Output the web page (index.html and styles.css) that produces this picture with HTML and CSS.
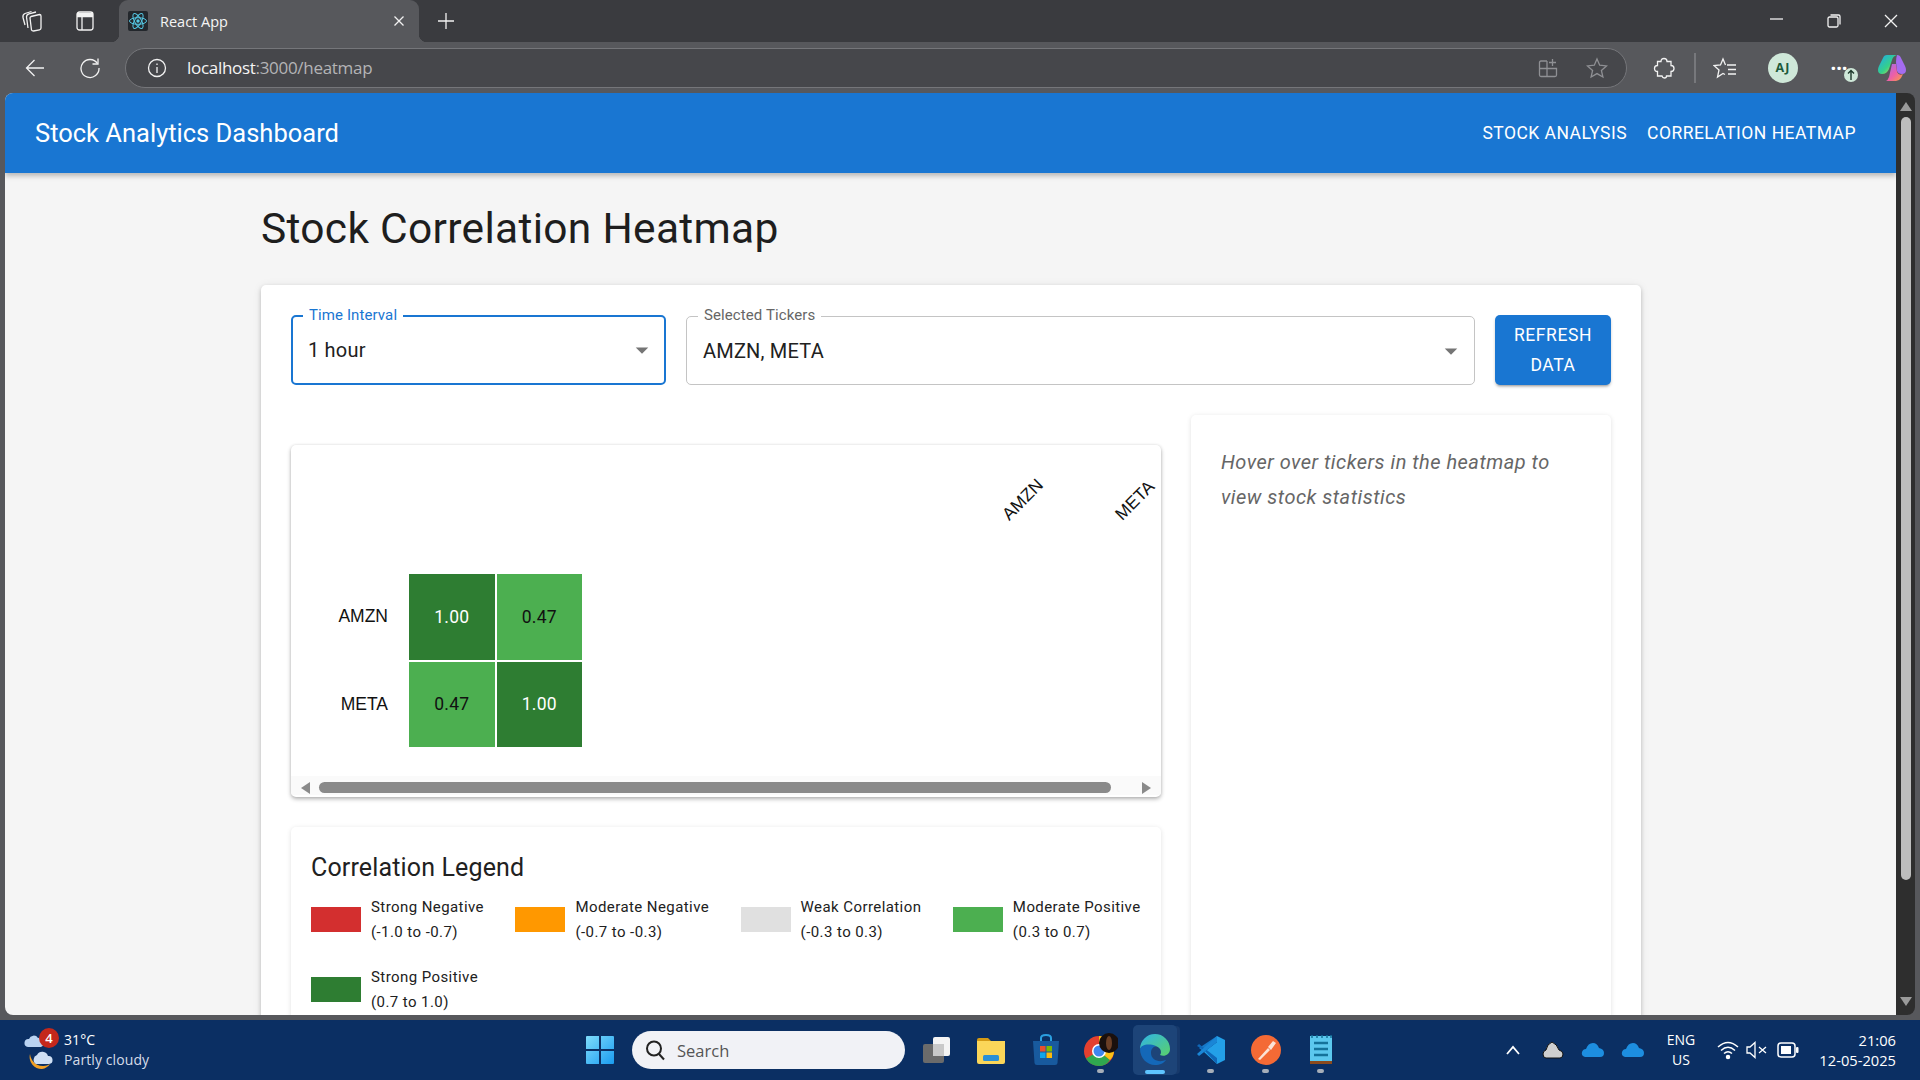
FILE: index.html
```html
<!DOCTYPE html>
<html>
  <head>
    <meta charset="utf-8" />
    <title>React App</title>
    <link rel="stylesheet" href="styles.css">
  </head>
  <body>
    <div class="tabstrip">
      <span class="slot strip-first">
        <svg width="24" height="24" viewBox="0 0 24 24" class="line"><path d="M11 7.500 19.500 5.500Q21 5.500 21 7V19Q21 20.500 19.500 20.800L13.500 22Q12 22 11.500 21L10 9Q10 8 11 7.500Z"/><path d="M8 19 6.500 8Q6.500 5.500 9 4.800L16 3"/><path d="M5 16 3 8.500Q2.500 5.500 5 4.500L11.500 2.500"/></svg>
      </span>
      <span class="slot strip-second">
        <svg width="20" height="22" viewBox="0 0 20 22" class="line"><rect x="2" y="2" width="16" height="18" rx="2.500"/><path d="M2 5H18" stroke-width="4.500"/><path d="M7 7V20"/></svg>
      </span>
      <div class="tab">
        <svg class="favicon" width="20" height="20" viewBox="0 0 20 20"><rect width="20" height="20" rx="2" fill="#23272c"/><g fill="none" stroke="#55c8e4" stroke-width="1"><ellipse cx="10" cy="10" rx="8.500" ry="3.300"/><ellipse cx="10" cy="10" rx="8.500" ry="3.300" transform="rotate(60 10 10)"/><ellipse cx="10" cy="10" rx="8.500" ry="3.300" transform="rotate(120 10 10)"/></g><circle cx="10" cy="10" r="1.700" fill="#55c8e4"/></svg>
        <span class="tab-title">React App</span>
        <svg class="tab-close line" width="12" height="12" viewBox="0 0 12 12"><path d="M1.500 1.500 10.500 10.500M10.500 1.500 1.500 10.500"/></svg>
      </div>
      <span class="slot strip-plus">
        <svg width="20" height="20" viewBox="0 0 20 20" class="line"><path d="M10 2V18M2 10H18"/></svg>
      </span>
      <div class="window-controls">
        <span class="slot"><svg width="14" height="14" viewBox="0 0 14 14" class="line"><path d="M1 5H14"/></svg></span>
        <span class="slot"><svg width="14" height="14" viewBox="0 0 14 14" class="line"><rect x="1" y="3" width="10" height="10" rx="1.500"/><path d="M3.500 1H11.500Q13 1 13 2.500V10.500"/></svg></span>
        <span class="slot"><svg width="14" height="14" viewBox="0 0 14 14" class="line"><path d="M1 1 13 13M13 1 1 13"/></svg></span>
      </div>
    </div>

    <div class="toolbar">
      <span class="slot tool"><svg width="22" height="22" viewBox="0 0 22 22" class="line"><path d="M20 11H2.500M10.500 3 2.500 11l8 8"/></svg></span>
      <span class="slot tool"><svg width="22" height="22" viewBox="0 0 22 22" class="line"><path d="M18.500 6.500A9 9 0 1 0 20 11"/><path d="M19 1.500V7H13.500"/></svg></span>
      <div class="address">
        <svg class="info line" width="20" height="20" viewBox="0 0 20 20"><circle cx="10" cy="10" r="8.500"/><path d="M10 9V15M10 5.500V7"/></svg>
        <span class="url">localhost<span class="url-dim">:3000/heatmap</span></span>
        <svg class="addr-apps dim-line" width="20" height="20" viewBox="0 0 20 20"><path d="M9 3H3Q1.500 3 1.500 4.500V17Q1.500 18.500 3 18.500H17Q18.500 18.500 18.500 17V10.500H1.500M9 3V18.500"/><path d="M14.500 1V8M11 4.500H18"/></svg>
        <svg class="addr-star dim-line" width="22" height="22" viewBox="0 0 22 22"><path d="M11 2 13.700 8.200 20.500 8.900 15.400 13.400 16.900 20 11 16.600 5.100 20 6.600 13.400 1.500 8.900 8.300 8.200Z"/></svg>
      </div>
      <span class="slot tool-ext"><svg width="22" height="22" viewBox="0 0 22 22" class="line"><path d="M8 4.500Q8 1.500 11 1.500T14 4.500H18V8.500Q21 8.500 21 11.500T18 14.500V19H13.500Q13.500 21 11.500 21T9 19H4.500V14.500Q1.500 14.500 1.500 11.500T4.500 8.500V4.500Z"/></svg></span>
      <span class="tool-sep"></span>
      <span class="slot tool-fav"><svg width="24" height="22" viewBox="0 0 24 22" class="line"><path d="M12.500 8 10 2 7.500 8 1 8.500 6 13 4.500 20 10 16.500 12 17.500"/><path d="M14 8H23M15 12.500H23M15 17H23"/></svg></span>
      <span class="slot tool-avatar"><span class="avatar">AJ</span></span>
      <span class="slot tool-more">
        <span class="more-dots">···</span>
        <span class="more-badge"><svg width="10" height="12" viewBox="0 0 10 12" fill="none" stroke="#1d3a2c" stroke-width="1.400"><path d="M5 11V2M2 4.500 5 1.500 8 4.500"/></svg></span>
      </span>
      <span class="slot tool-copilot">
        <svg width="30" height="28" viewBox="0 0 30 28">
          <defs>
            <linearGradient id="copA" x1="0" y1="0" x2="1" y2="1"><stop offset="0" stop-color="#1fa8ef"/><stop offset="0.55" stop-color="#35d08a"/><stop offset="1" stop-color="#f3dc3a"/></linearGradient>
            <linearGradient id="copB" x1="0" y1="0" x2="1" y2="1"><stop offset="0" stop-color="#9a6cf2"/><stop offset="0.55" stop-color="#ee5fa6"/><stop offset="1" stop-color="#f9a03b"/></linearGradient>
          </defs>
          <path d="M10 1H20Q16 2 15 6L12 15Q10 20 5 20 1 20 1 16 1 14 2 12L6 4Q7 1 10 1Z" fill="url(#copA)"/>
          <path d="M20 1Q23 1 24 4L28 12Q29 14 29 16 29 20 25 20 21 20 20 17L19 8Q19 4 20 1Z" fill="#a46cf0"/>
          <path d="M15 10 19 10 20 18Q22 22 26 20L24 24Q22 27 19 27H9Q11 26 12 23Z" fill="url(#copB)"/>
        </svg>
      </span>
    </div>

    <div class="viewport">
      <div class="page">
        <header class="appbar">
          <div class="brand">Stock Analytics Dashboard</div>
          <nav class="appnav">
            <a>Stock Analysis</a>
            <a>Correlation Heatmap</a>
          </nav>
        </header>

        <main class="content">
          <h1>Stock Correlation Heatmap</h1>
          <section class="paper">
            <div class="controls">
              <div class="field field-focus field-interval">
                <label>Time Interval</label>
                <span>1 hour</span>
                <svg width="30" height="30" viewBox="0 0 24 24"><path d="M7 10l5 5 5-5z" fill="#757575"/></svg>
              </div>
              <div class="field field-tickers">
                <label>Selected Tickers</label>
                <span>AMZN, META</span>
                <svg width="30" height="30" viewBox="0 0 24 24"><path d="M7 10l5 5 5-5z" fill="#757575"/></svg>
              </div>
              <button class="refresh">Refresh Data</button>
            </div>

            <div class="columns">
              <div class="left-col">
                <div class="card heat-card">
                  <div class="heat-head">
                    <span>AMZN</span>
                    <span>META</span>
                  </div>
                  <div class="heat-row">
                    <span class="heat-label">AMZN</span>
                    <span class="cell strong">1.00</span>
                    <span class="cell moderate">0.47</span>
                  </div>
                  <div class="heat-row">
                    <span class="heat-label">META</span>
                    <span class="cell moderate">0.47</span>
                    <span class="cell strong">1.00</span>
                  </div>
                  <div class="hscroll">
                    <i class="arrow-left"></i>
                    <b></b>
                    <i class="arrow-right"></i>
                  </div>
                </div>

                <div class="card legend">
                  <h2>Correlation Legend</h2>
                  <div class="legend-items">
                    <div class="legend-item"><i class="swatch c-red"></i><p>Strong Negative<br>(-1.0 to -0.7)</p></div>
                    <div class="legend-item"><i class="swatch c-orange"></i><p>Moderate Negative<br>(-0.7 to -0.3)</p></div>
                    <div class="legend-item"><i class="swatch c-grey"></i><p>Weak Correlation<br>(-0.3 to 0.3)</p></div>
                    <div class="legend-item"><i class="swatch c-green"></i><p>Moderate Positive<br>(0.3 to 0.7)</p></div>
                    <div class="legend-item"><i class="swatch c-dark"></i><p>Strong Positive<br>(0.7 to 1.0)</p></div>
                  </div>
                </div>
              </div>

              <aside class="card stats">
                <p>Hover over tickers in the heatmap to view stock statistics</p>
              </aside>
            </div>
          </section>
        </main>
      </div>
      <div class="vscroll">
        <i class="arrow-up"></i>
        <b></b>
        <i class="arrow-down"></i>
      </div>
    </div>

    <footer class="taskbar">
      <div class="weather">
        <svg class="weather-icon" width="34" height="44" viewBox="0 0 34 44">
          <path d="M4 19a4 4 0 0 1 1-8 5 5 0 0 1 9-1 4 4 0 0 1 3 9z" fill="#b9d3f2"/>
          <path d="M6 26a12 12 0 0 0 12 15 12 12 0 0 0 8-5A13 13 0 0 1 6 26z" fill="#f2a024"/>
          <path d="M12 36a5 5 0 0 1 1-9 6 6 0 0 1 11 1 4 4 0 0 1 1 8z" fill="#cfe0f5"/>
        </svg>
        <span class="weather-badge">4</span>
        <div class="weather-text">
          <span>31°C</span>
          <span>Partly cloudy</span>
        </div>
      </div>

      <span class="app start">
        <svg width="30" height="30" viewBox="0 0 30 30"><defs><linearGradient id="win" x1="0" y1="0" x2="1" y2="1"><stop offset="0" stop-color="#7fdcfb"/><stop offset="1" stop-color="#1a9cf0"/></linearGradient></defs><path d="M1 2Q1 1 2 1H14V14H1ZM16 1H28Q29 1 29 2V14H16ZM1 16H14V29H2Q1 29 1 28ZM16 16H29V28Q29 29 28 29H16Z" fill="url(#win)"/></svg>
      </span>
      <div class="search">
        <svg width="22" height="22" viewBox="0 0 22 22" fill="none" stroke="#222" stroke-width="2"><circle cx="10" cy="9.500" r="7"/><path d="M15 15 20 20.500"/></svg>
        <span>Search</span>
      </div>

      <span class="app">
        <svg width="32" height="32" viewBox="0 0 32 32"><rect x="13" y="3" width="17" height="19" rx="2" fill="#f4f4f4"/><rect x="3" y="10" width="21" height="19" rx="2" fill="#6b6b6b"/><rect x="13" y="10" width="11" height="12" fill="#c9c9c9"/></svg>
      </span>
      <span class="app">
        <svg width="32" height="30" viewBox="0 0 32 30"><path d="M2 5Q2 3 4 3H13L16 6H2Z" fill="#d49a14"/><path d="M2 6H30V27Q30 29 28 29H4Q2 29 2 27Z" fill="#fbd659"/><rect x="8" y="20" width="16" height="6" rx="1.500" fill="#2a8fd6"/></svg>
      </span>
      <span class="app">
        <svg width="30" height="32" viewBox="0 0 30 32"><path d="M10 8V4Q10 1 15 1T20 4V8" fill="none" stroke="#2b9fe0" stroke-width="2"/><path d="M2 7H28L26.500 29Q26.400 31 24 31H6Q3.600 31 3.500 29Z" fill="#185a9e"/><rect x="9" y="12" width="5.500" height="5.500" fill="#e8502f"/><rect x="15.500" y="12" width="5.500" height="5.500" fill="#7fb900"/><rect x="9" y="18.500" width="5.500" height="5.500" fill="#11a5ea"/><rect x="15.500" y="18.500" width="5.500" height="5.500" fill="#fcb90c"/></svg>
      </span>
      <span class="app running">
        <svg width="34" height="34" viewBox="0 0 34 34"><circle cx="15" cy="18" r="15" fill="#e4402f"/><path d="M15 18 2 25.500A15 15 0 0 0 15 33Q22 33 26 27Z" fill="#2fa84f"/><path d="M15 3A15 15 0 0 1 30 18Q30 23 26 27L15 18Z" fill="#fbc116"/><circle cx="15" cy="18" r="7" fill="#fff"/><circle cx="15" cy="18" r="5.500" fill="#3f86ef"/><circle cx="25" cy="10" r="10" fill="#1a100d"/><ellipse cx="25" cy="10" rx="3" ry="7" fill="#6b3f26"/></svg>
      </span>
      <span class="app edge-active">
        <svg width="32" height="32" viewBox="0 0 32 32"><defs><linearGradient id="edgeA" x1="0" y1="0" x2="1" y2="1"><stop offset="0" stop-color="#2fb4e8"/><stop offset="1" stop-color="#5ad06a"/></linearGradient></defs><path d="M1 15A15 15 0 0 1 31 15C31 21 25 23 21 21 24 17 20 11 14 12 7 12 2 13 1 15Z" fill="url(#edgeA)"/><path d="M1 15C1 24 8 31 16 31 21 31 25 29 27 26 20 29 12 26 12 19 12 15 14 13 17 12 9 9 2 11 1 15Z" fill="#1468b8"/></svg>
      </span>
      <span class="app running">
        <svg width="30" height="30" viewBox="0 0 30 30"><path d="M21 1 29 5V25L21 29 8 17 21 7Z" fill="#23a0e8"/><path d="M21 1V7L8 17 3 13Z" fill="#1678c8"/><path d="M8 15 21 29V23L3 9 1 11Z" fill="#0f67b8"/><path d="M1 19 3 21 21 7V1Z" fill="#1a86d6"/></svg>
      </span>
      <span class="app running">
        <svg width="30" height="30" viewBox="0 0 30 30"><circle cx="15" cy="15" r="15" fill="#f46a35"/><path d="M7 24 17 13 19 15 9 25Z M17 12 22 6 25 8 20 15Z" fill="#fbe3d6"/></svg>
      </span>
      <span class="app running">
        <svg width="24" height="32" viewBox="0 0 24 32"><rect x="1" y="2" width="22" height="26" fill="#5cc8ee"/><rect x="1" y="27" width="22" height="3" fill="#8a4a1d"/><path d="M5 9H19M5 15H19M5 21H19" stroke="#14729a" stroke-width="2.400"/><path d="M3 1V4M8 1V4M13 1V4M18 1V4M22 1V4" stroke="#14729a" stroke-width="1.500"/></svg>
      </span>

      <div class="tray">
        <span class="tray-slot"><svg width="16" height="10" viewBox="0 0 16 10" fill="none" stroke="#fff" stroke-width="1.800"><path d="M2 9 8 2l6 7"/></svg></span>
        <span class="tray-slot"><svg width="22" height="22" viewBox="0 0 22 22"><path d="M4 19Q1 19 1 15 1 12 4 11 5 5 10 3 15 5 17 11 21 12 21 15 21 19 18 19Z" fill="#cfcfcf" stroke="#111" stroke-width="1"/></svg></span>
        <span class="tray-slot"><svg width="24" height="18" viewBox="0 0 24 18"><path d="M4 16Q0 15 1 11 2 8 5 8 7 2 12 2 16 2 18 7 23 8 23 12 23 16 19 16Z" fill="#1d8ee0"/></svg></span>
        <span class="tray-slot"><svg width="24" height="18" viewBox="0 0 24 18"><path d="M4 16Q0 15 1 11 2 8 5 8 7 2 12 2 16 2 18 7 23 8 23 12 23 16 19 16Z" fill="#1d8ee0"/></svg></span>
        <div class="lang"><span>ENG</span><span>US</span></div>
        <span class="tray-wifi"><svg width="22" height="20" viewBox="0 0 22 20" fill="none" stroke="#fff" stroke-width="1.500"><path d="M1 7Q11 -2 21 7M4 10.500Q11 4 18 10.500M7 13.500Q11 10 15 13.500"/><circle cx="11" cy="17" r="1.500" fill="#fff"/></svg></span>
        <span class="tray-vol"><svg width="22" height="20" viewBox="0 0 22 20" fill="none" stroke="#fff" stroke-width="1.300"><path d="M1 7V13H4L9 17.500V2.500L4 7Z"/><path d="M13 7 20 13M20 7 13 13"/></svg></span>
        <span class="tray-batt"><svg width="22" height="16" viewBox="0 0 22 16"><rect x="1" y="1" width="17" height="14" rx="3" fill="none" stroke="#fff" stroke-width="1.500"/><rect x="4" y="4" width="10" height="8" fill="#fff"/><rect x="19" y="5" width="2.500" height="6" rx="1" fill="#fff"/></svg></span>
        <div class="clock"><span>21:06</span><span>12-05-2025</span></div>
      </div>
    </footer>
  </body>
</html>
```

FILE: styles.css
```css
html, body {
  margin: 0;
  height: 1080px;
  overflow: hidden;
  background: #57585c;
  font-family: "Open Sans", sans-serif;
}

svg { display: block; flex: none; }

.line {
  fill: none;
  stroke: #f2f2f2;
  stroke-width: 1.3;
}
.dim-line {
  fill: none;
  stroke: #8f9094;
  stroke-width: 1.3;
}

.slot {
  display: flex;
  align-items: center;
  justify-content: center;
  flex: none;
}

/* browser frame */
.tabstrip {
  display: flex;
  height: 42px;
  background: #3a3b3f;
  align-items: stretch;
}
.strip-first { width: 53px; margin-left: 5px; }
.strip-second { width: 53px; }
.strip-plus { width: 54px; }

.tab {
  position: relative;
  display: flex;
  align-items: center;
  width: 300px;
  margin-left: 8px;
  padding-left: 9px;
  box-sizing: border-box;
  background: #57585c;
  border-radius: 9px 9px 0 0;
  color: #f5f5f5;
  font-size: 14.5px;
}
.tab::before, .tab::after {
  content: "";
  position: absolute;
  bottom: 0;
  width: 8px;
  height: 8px;
}
.tab::before {
  left: -8px;
  background: radial-gradient(circle at 0 0, transparent 8px, #57585c 8.500px);
}
.tab::after {
  right: -8px;
  background: radial-gradient(circle at 100% 0, transparent 8px, #57585c 8.500px);
}
.tab-title { margin-left: 12px; flex: 1; }
.tab-close { margin-right: 14px; }

.window-controls {
  display: flex;
  margin-left: auto;
}
.window-controls .slot { width: 57.500px; }

.toolbar {
  display: flex;
  align-items: center;
  height: 51px;
  background: #57585c;
}
.tool { width: 55px; height: 40px; }
.tool:first-child { margin-left: 7px; }

.address {
  display: flex;
  align-items: center;
  width: 1502px;
  height: 40px;
  margin-left: 8px;
  box-sizing: border-box;
  background: #46474b;
  border: 1.500px solid #75767a;
  border-radius: 20px;
}
.info { margin-left: 21px; }
.url {
  margin-left: 20px;
  color: #f5f5f5;
  font-size: 17px;
  letter-spacing: -0.3px;
}
.url-dim { color: #b4b4b6; }
.addr-apps { margin-left: auto; }
.addr-star { margin: 0 18px 0 28px; }

.tool-ext { width: 54px; margin-left: 10px; }
.tool-sep {
  width: 2px;
  height: 30px;
  margin: 0 3px;
  background: #77787c;
}
.tool-fav { width: 52px; }
.tool-avatar { width: 64px; }
.avatar {
  display: flex;
  align-items: center;
  justify-content: center;
  width: 30px;
  height: 30px;
  border-radius: 50%;
  background: #cfe8d9;
  color: #1d5a39;
  font: 700 12.500px "Open Sans", sans-serif;
  letter-spacing: 1px;
}
.tool-more { position: relative; width: 48px; height: 40px; }
.more-dots {
  color: #fff;
  font-size: 20px;
  font-weight: 700;
  line-height: 1;
}
.more-badge {
  position: absolute;
  left: 29px;
  top: 20px;
  display: flex;
  align-items: center;
  justify-content: center;
  width: 14px;
  height: 14px;
  border-radius: 50%;
  background: #cfe8d9;
}
.tool-copilot { width: 57px; }

/* page in the browser */
.viewport {
  display: flex;
  height: 922px;
  margin-left: 5px;
  overflow: hidden;
}
.page {
  width: 1891px;
  height: 922px;
  overflow: hidden;
  background: #f5f5f5;
  border-radius: 8px 0 0 8px;
  font-family: Roboto, sans-serif;
}

.appbar {
  display: flex;
  align-items: center;
  justify-content: space-between;
  height: 80px;
  padding: 0 30px;
  background: #1976d2;
  color: #fff;
  box-shadow: 0 3px 5px rgba(0, 0, 0, 0.25);
  position: relative;
}
.brand { font-size: 25.500px; }
.appnav { display: flex; }
.appnav a {
  padding: 0 10px;
  font-size: 17.500px;
  letter-spacing: 0.47px;
  text-transform: uppercase;
}

.content {
  width: 1380px;
  margin-left: 256px;
}
h1 {
  margin: 30px 0;
  color: #1e1e1e;
  font-size: 42.500px;
  font-weight: 400;
  letter-spacing: 0.3px;
  line-height: 52px;
}

.paper {
  padding: 30px;
  background: #fff;
  border-radius: 5px;
  box-shadow: 0 2px 4px rgba(0, 0, 0, 0.2), 0 1px 10px rgba(0, 0, 0, 0.08);
}

.controls {
  display: flex;
  gap: 20px;
}
.field {
  position: relative;
  display: flex;
  align-items: center;
  justify-content: space-between;
  height: 69px;
  margin-top: 1px;
  padding: 0 8px 0 16px;
  box-sizing: border-box;
  background: #fff;
  border: 1px solid #c4c4c4;
  border-radius: 5px;
  color: #212121;
  font-size: 20px;
  letter-spacing: 0.2px;
}
.field label {
  position: absolute;
  left: 11px;
  top: -11px;
  padding: 0 6px;
  background: #fff;
  color: #666;
  font-size: 15px;
  letter-spacing: 0.1px;
  line-height: 18px;
}
.field-focus {
  height: 70px;
  margin-top: 0;
  border: 2px solid #1976d2;
  padding-left: 15px;
  padding-right: 7px;
}
.field-focus label { left: 10px; top: -11px; color: #1976d2; }
.field-interval { width: 375px; }
.field-tickers { width: 789px; }

.refresh {
  width: 116px;
  height: 70px;
  padding: 0 10px;
  background: #1976d2;
  border: 0;
  border-radius: 5px;
  box-shadow: 0 3px 2px -2px rgba(0, 0, 0, 0.2), 0 2px 3px rgba(0, 0, 0, 0.2);
  color: #fff;
  font: 400 17.500px/30px Roboto, sans-serif;
  letter-spacing: 0.6px;
  text-transform: uppercase;
}

.columns {
  display: flex;
  gap: 30px;
  margin-top: 30px;
}
.left-col {
  width: 870px;
  padding-top: 30px;
}
.card {
  background: #fff;
  border-radius: 5px;
  box-shadow: 0 1px 5px rgba(0, 0, 0, 0.12);
}

.heat-card {
  height: 352px;
  overflow: hidden;
  box-shadow: 0 2px 4px rgba(0, 0, 0, 0.3), 0 0 3px rgba(0, 0, 0, 0.08);
  color: #111;
  font-family: "Liberation Sans", sans-serif;
  font-size: 17.500px;
}
.heat-head {
  display: flex;
  align-items: flex-end;
  height: 129px;
  padding: 0 0 50px 721px;
  box-sizing: border-box;
}
.heat-head span {
  width: 113px;
  flex: none;
  line-height: 20px;
  transform: rotate(-45deg);
  transform-origin: 0 100%;
}
.heat-row {
  display: flex;
  gap: 2px;
  margin-bottom: 2px;
}
.heat-label {
  display: flex;
  align-items: center;
  justify-content: flex-end;
  width: 97px;
  margin-right: 19px;
}
.cell {
  display: flex;
  align-items: center;
  justify-content: center;
  width: 85.500px;
  height: 85.500px;
  font-family: Roboto, sans-serif;
  letter-spacing: 0.2px;
}
.strong { background: #2e7d32; color: #fff; }
.moderate { background: #4caf50; color: #111; }

.hscroll {
  display: flex;
  align-items: center;
  height: 19px;
  margin-top: 29px;
  padding: 4px 10px 0;
  box-sizing: border-box;
  background: #fafafa;
}
.hscroll b {
  width: 792px;
  height: 11px;
  margin: 0 31px 0 9px;
  background: #8a8a8a;
  border-radius: 6px;
}
.arrow-left {
  width: 0;
  height: 0;
  border: 6px solid transparent;
  border-left: 0;
  border-right: 9px solid #8a8a8a;
}
.arrow-right {
  width: 0;
  height: 0;
  border: 6px solid transparent;
  border-right: 0;
  border-left: 9px solid #8a8a8a;
}

.legend {
  margin-top: 30px;
  padding: 26px 20px 30px;
  color: #212121;
}
.legend h2 {
  margin: 0 0 12px;
  font-size: 25px;
  font-weight: 400;
  letter-spacing: 0.15px;
  line-height: 30px;
}
.legend-items {
  display: flex;
  flex-wrap: wrap;
  gap: 21px 31.500px;
}
.legend-item {
  display: flex;
  align-items: center;
  gap: 10px;
}
.legend-item p {
  margin: 0;
  font-size: 15px;
  letter-spacing: 0.42px;
  line-height: 24.500px;
}
.swatch {
  width: 50px;
  height: 25px;
}
.c-red { background: #d32f2f; }
.c-orange { background: #ff9800; }
.c-grey { background: #e0e0e0; }
.c-green { background: #4caf50; }
.c-dark { background: #2e7d32; }

.stats {
  width: 420px;
  height: 700px;
  padding: 30px;
  box-sizing: border-box;
}
.stats p {
  margin: 0;
  color: #666;
  font-size: 20px;
  font-style: italic;
  letter-spacing: 0.48px;
  line-height: 35px;
}

.vscroll {
  display: flex;
  flex-direction: column;
  align-items: center;
  width: 19px;
  height: 922px;
  padding: 9px 0;
  box-sizing: border-box;
  background: #2e2e2e;
  border-radius: 0 8px 8px 0;
}
.vscroll b {
  width: 10px;
  height: 763px;
  margin: 6px 0 auto;
  background: #bdbdbd;
  border-radius: 5px;
}
.arrow-up {
  width: 0;
  height: 0;
  border: 6px solid transparent;
  border-top: 0;
  border-bottom: 9px solid #9a9a9a;
}
.arrow-down {
  width: 0;
  height: 0;
  border: 6px solid transparent;
  border-bottom: 0;
  border-top: 9px solid #9a9a9a;
}

/* windows taskbar */
.taskbar {
  display: flex;
  align-items: center;
  height: 60px;
  margin-top: 5px;
  background: #0b2f63;
  color: #fff;
  font-size: 14px;
}
.weather {
  position: relative;
  display: flex;
  align-items: center;
  width: 572px;
  padding-left: 24px;
  box-sizing: border-box;
  flex: none;
}
.weather-badge {
  position: absolute;
  left: 39px;
  top: 0;
  display: flex;
  align-items: center;
  justify-content: center;
  width: 20px;
  height: 20px;
  border-radius: 50%;
  background: #c4281c;
  font-size: 13px;
  font-weight: 600;
}
.weather-text {
  display: flex;
  flex-direction: column;
  margin-left: 6px;
  line-height: 20px;
  letter-spacing: 0.1px;
}
.weather-text span:last-child { color: #d5dce8; }

.app {
  position: relative;
  display: flex;
  align-items: center;
  justify-content: center;
  width: 55px;
  height: 50px;
  flex: none;
}
.start { margin-right: 5px; }
.running::after {
  content: "";
  position: absolute;
  left: 24px;
  bottom: 2px;
  width: 7px;
  height: 4px;
  border-radius: 2px;
  background: #a6aeb9;
}
.edge-active {
  width: 44px;
  margin: 0 6px 0 5px;
  background: #1d4478;
  border-radius: 5px;
  box-shadow: 4px 0 0 -1px #17396b;
}
.edge-active::after {
  content: "";
  position: absolute;
  left: 12px;
  bottom: 1px;
  width: 20px;
  height: 4px;
  border-radius: 2px;
  background: #5ec4ff;
}

.search {
  display: flex;
  align-items: center;
  gap: 11px;
  width: 273px;
  height: 38px;
  margin-right: 3px;
  padding-left: 12px;
  box-sizing: border-box;
  background: #f1f2f6;
  border-radius: 19px;
  color: #555;
  font-size: 16.500px;
}

.tray {
  display: flex;
  align-items: center;
  margin-left: auto;
  padding-right: 24px;
}
.tray-slot {
  display: flex;
  justify-content: center;
  width: 40px;
}
.lang {
  display: flex;
  flex-direction: column;
  align-items: center;
  width: 56px;
  line-height: 20px;
}
.tray-wifi, .tray-vol, .tray-batt {
  display: flex;
  justify-content: center;
}
.tray-wifi { width: 28px; margin-left: 5px; }
.tray-vol { width: 30px; }
.tray-batt { width: 32px; }
.clock {
  display: flex;
  flex-direction: column;
  align-items: flex-end;
  width: 92px;
  font-size: 14.700px;
  line-height: 20px;
}
```
